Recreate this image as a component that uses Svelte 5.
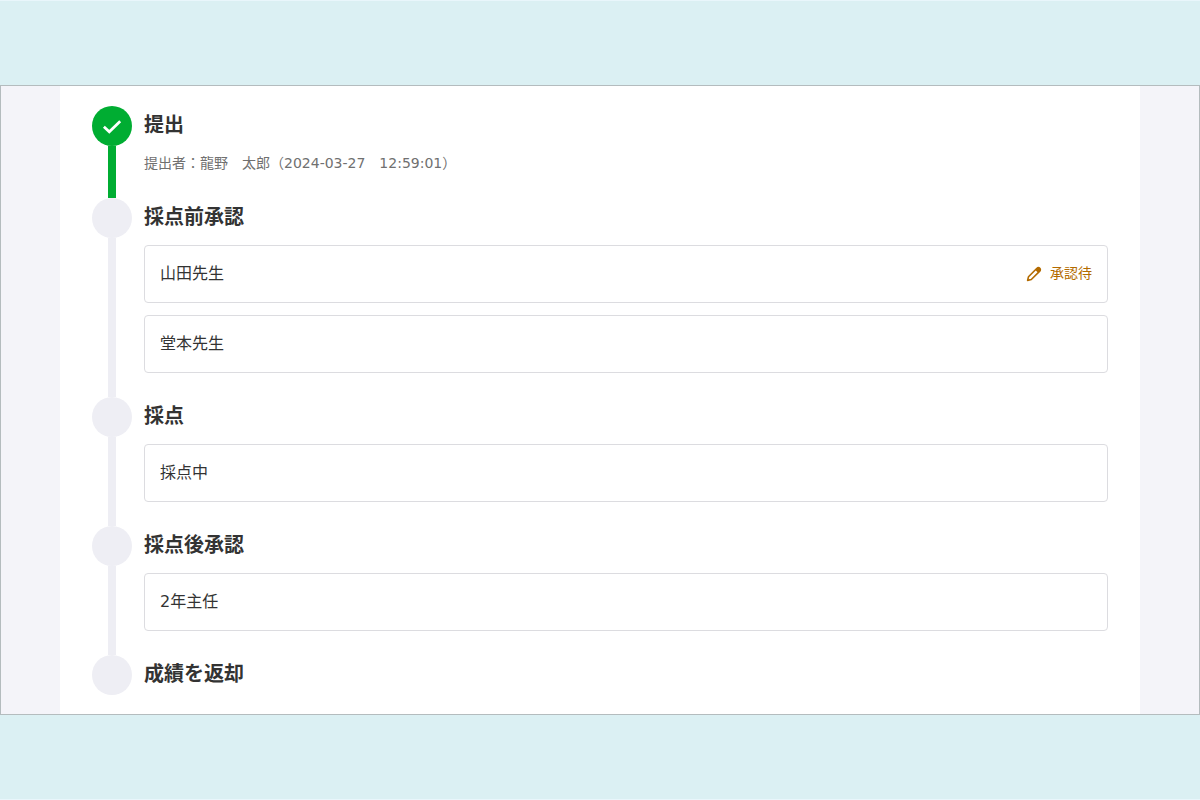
<script>
  const steps = [
    {
      title: '提出',
      done: true,
      note: '提出者：龍野　太郎（2024-03-27　12:59:01）',
      items: []
    },
    {
      title: '採点前承認',
      items: [
        { name: '山田先生', status: '承認待' },
        { name: '堂本先生' }
      ]
    },
    { title: '採点', items: [{ name: '採点中' }] },
    { title: '採点後承認', items: [{ name: '2年主任' }] },
    { title: '成績を返却', items: [] }
  ]
</script>

<div class="page">
  <div class="frame">
    <main class="sheet">
      <ol class="steps">
        {#each steps as step}
          <li class="step" class:done={step.done}>
            <div class="rail">
              <span class="dot">
                {#if step.done}
                  <svg viewBox="0 0 24 24" width="24" height="24" aria-hidden="true">
                    <path d="M3.9 12.7 L9.3 17.8 L20.2 7.2" fill="none" stroke="#fff" stroke-width="2.7" />
                  </svg>
                {/if}
              </span>
            </div>
            <div class="content">
              <h2>{step.title}</h2>
              {#if step.note}
                <p class="note">{step.note}</p>
              {/if}
              {#if step.items.length}
                <ul class="items">
                  {#each step.items as item}
                    <li class="item">
                      <span class="name">{item.name}</span>
                      {#if item.status}
                        <span class="status">
                          <svg viewBox="0 0 16 16" width="16" height="16" aria-hidden="true">
                            <path
                              d="M1.6 14.4 L2.5 10.7 L10.7 2.5 Q12.4 1 13.8 2.3 Q15 3.8 13.5 5.4 L5.3 13.5 Z"
                              fill="none"
                              stroke="currentColor"
                              stroke-width="1.6"
                              stroke-linejoin="round"
                            />
                            <path d="M9.3 3.9 L11.2 2 Q12.6 1 14 2.2 Q15.1 3.6 14 5 L12.1 6.8 Z" fill="currentColor" />
                          </svg>
                          <span>{item.status}</span>
                        </span>
                      {/if}
                    </li>
                  {/each}
                </ul>
              {/if}
            </div>
          </li>
        {/each}
      </ol>
    </main>
  </div>
</div>

<style>
  :global(body) {
    background-color: #dbf0f3;
  }

  .page {
    box-sizing: border-box;
    min-height: 100vh;
    display: flex;
    flex-direction: column;
    justify-content: center;
    border-top: 1px solid #e9f6fb;
    border-bottom: 1px solid #e9f6fb;
    font-family: 'DejaVu Sans', 'Noto Sans CJK JP', sans-serif;
    color: #333;
  }

  .frame {
    padding: 0 59px;
    border: 1px solid #b4bcbe;
    background-color: #f4f4f9;
  }

  .sheet {
    padding: 20px 32px 19px;
    background-color: #fff;
  }

  .steps,
  .items {
    margin: 0;
    padding: 0;
    list-style: none;
  }

  .step {
    display: flex;
    gap: 12px;
  }

  .rail {
    width: 40px;
    display: flex;
    flex-direction: column;
    align-items: center;
  }

  .rail::after {
    content: '';
    flex: 1;
    width: 8px;
    background-color: #eeeef4;
  }

  .dot {
    width: 40px;
    height: 40px;
    display: flex;
    align-items: center;
    justify-content: center;
    border-radius: 50%;
    background-color: #eeeef4;
  }

  .done .dot,
  .done .rail::after {
    background-color: #00ad32;
  }

  .content {
    flex: 1;
    padding-bottom: 24px;
  }

  .step:last-child .content {
    padding-bottom: 0;
  }

  .step:last-child h2 {
    margin-bottom: 0;
  }

  h2 {
    margin: 0 0 9px;
    font-size: 20px;
    line-height: 38px;
    font-weight: 700;
  }

  .note {
    margin: 0;
    padding-bottom: 1px;
    font-size: 14px;
    line-height: 20px;
    color: #707070;
  }

  .items {
    display: flex;
    flex-direction: column;
    gap: 12px;
  }

  .item {
    display: flex;
    align-items: center;
    justify-content: space-between;
    padding: 15px;
    border: 1px solid #dcdce0;
    border-radius: 4px;
  }

  .name {
    font-size: 16px;
    line-height: 26px;
  }

  .status {
    display: flex;
    align-items: center;
    gap: 8px;
    font-size: 14px;
    line-height: 20px;
    color: #b36b00;
  }

  .status span {
    padding-bottom: 2px;
  }
</style>
